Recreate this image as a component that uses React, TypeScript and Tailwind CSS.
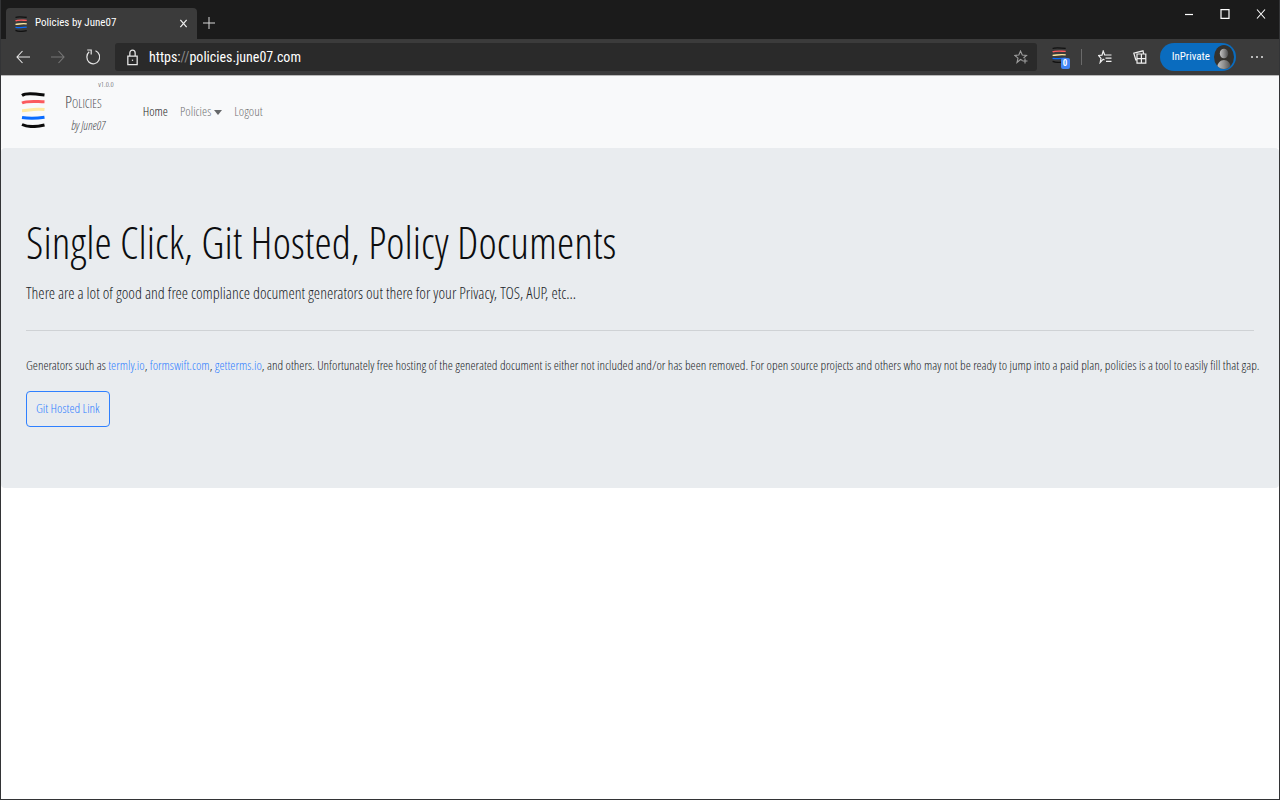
function Stripes({ className, edge = '#0b0b0b' }: { className: string; edge?: string }) {
  return (
    <svg viewBox="0 0 24 36" preserveAspectRatio="none" className={className} fill="none" strokeWidth="3" aria-hidden="true">
      <path d="M1 3.400C5 .8 12 1.600 23.500 3" stroke={edge} />
      <path d="M1 11C6 8.500 14 9.600 23.500 9.800" stroke="#fb5a5e" />
      <path d="M1 18.800C8 18.800 12 16 23.500 17.600" stroke="#ffe9a0" />
      <path d="M1 25.400C8 26.600 14 26.600 23.500 25.200" stroke="#0a6cff" />
      <path d="M1 32.500C7 35.200 16 34.800 23.500 33" stroke={edge} />
    </svg>
  );
}

function TabStrip() {
  return (
    <header className="flex h-[39px] items-stretch bg-[#1b1b1b] pl-[5px]">
      <div className="mt-2 flex w-[191px] items-center rounded-t bg-[#3b3b3b] pr-[6px] pl-[9px]">
        <Stripes className="h-4 w-3" edge="#111" />
        <span className="ml-2 flex-1 text-[11px]">Policies by June07</span>
        <button aria-label="Close tab" className="grid size-4 place-items-center">
          <svg viewBox="0 0 10 10" className="size-[9px]" fill="none" stroke="#eee" strokeWidth="1.400"><path d="M1.500 1l7 8M8.500 1l-7 8" /></svg>
        </button>
      </div>
      <button aria-label="New tab" className="mt-[6px] grid w-6 place-items-center">
        <svg viewBox="0 0 12 12" className="size-3" stroke="#d8d8d8" strokeWidth="1"><path d="M6 0v12M0 6h12" /></svg>
      </button>
      <div className="ml-auto flex h-7 items-center">
        <button aria-label="Minimize" className="grid h-full w-9 place-items-center">
          <svg viewBox="0 0 10 10" className="size-[10px]" stroke="#fff" strokeWidth="1.200"><path d="M1 5.500h8" /></svg>
        </button>
        <button aria-label="Maximize" className="grid h-full w-9 place-items-center">
          <svg viewBox="0 0 10 10" className="size-[10px]" fill="none" stroke="#fff" strokeWidth="1.200"><path d="M1 .6h8v8.800H1z" /></svg>
        </button>
        <button aria-label="Close window" className="grid h-full w-9 place-items-center">
          <svg viewBox="0 0 10 10" className="size-[10px]" stroke="#fff" strokeWidth="1.100"><path d="M1 .5l8 9M9 .5l-8 9" /></svg>
        </button>
      </div>
    </header>
  );
}

function Toolbar() {
  return (
    <div className="flex h-9 items-center bg-[#3b3b3b] pr-3 pl-[10px]">
      <div className="flex w-[104px] items-center">
        <button aria-label="Back" className="grid w-6 place-items-center">
          <svg viewBox="0 0 14 14" className="size-[14px]" fill="none" stroke="#e6e6e6" strokeWidth="1.100"><path d="M14 7H1M6.500 1L1 7l5.500 6" /></svg>
        </button>
        <button aria-label="Forward" className="ml-[11px] grid w-6 place-items-center">
          <svg viewBox="0 0 14 14" className="size-[14px]" fill="none" stroke="#777" strokeWidth="1.100"><path d="M0 7h13M7.500 1L13 7l-5.500 6" /></svg>
        </button>
        <button aria-label="Refresh" className="ml-[11px] grid w-6 place-items-center">
          <svg viewBox="0 0 14 16" className="h-4 w-[14px]" fill="none" stroke="#e6e6e6" strokeWidth="1.200"><path d="M9.500 1.700A6.400 6.800 0 1 1 3.200 2.800M1.200 1h4v4.500" /></svg>
        </button>
      </div>
      <div className="flex h-7 flex-1 items-center rounded-[3px] bg-[#2a2a2a] pr-2 pl-3">
        <svg viewBox="0 0 10 16" className="h-[17px] w-[11px]" fill="none" stroke="#e6e6e6" strokeWidth="1.200" aria-hidden="true">
          <path d="M.6 6.600h8.800v8H.6zM2.500 6.600V3.800a2.500 2.800 0 0 1 5 0v2.800" />
          <path d="M4.400 10h1.200v1.200H4.400z" fill="#e6e6e6" stroke="none" />
        </svg>
        <div aria-label="Address" className="ml-[11px] flex-1 text-[14px]">
          https:<span className="text-[#8b8b8b]">//</span>policies.june07.com
        </div>
        <button aria-label="Add to favorites" className="grid size-4 place-items-center">
          <svg viewBox="0 0 14 14" className="size-[14px]" fill="none" stroke="#9d9d9d" strokeWidth="1.100">
            <path d="M8.500 10.600L6.500 9.500 3 12.500 4 8.200.8 5.400l4-.4L6.500 1l1.800 4 4.200.4-3 2.600M11 8.500v5M8.500 11h5" />
          </svg>
        </button>
      </div>
      <button aria-label="Policies extension" className="relative ml-[15px] h-6 w-[18px]">
        <Stripes className="mb-1 h-4 w-[14px]" edge="#111" />
        <span className="absolute right-0 bottom-0 grid h-[11px] w-[9px] place-items-center rounded-[2px] bg-[#4285f4] text-[9px] leading-none font-bold">0</span>
      </button>
      <span className="ml-[11px] h-4 w-px bg-[#6a6a6a]" />
      <button aria-label="Favorites" className="ml-4 grid size-[14px] place-items-center">
        <svg viewBox="0 0 14 14" className="size-[14px]" fill="none" stroke="#f0f0f0" strokeWidth="1.200">
          <path d="M6.500 10L5.200 9.200 2.200 12.500 3 8.400.6 5.500l3.400-.3L5.200 1l1.500 4H13.500M7.500 8.200h6M8 11.400h5.500" />
        </svg>
      </button>
      <button aria-label="Collections" className="ml-[21px] grid size-[14px] place-items-center">
        <svg viewBox="0 0 14 14" className="size-[14px]" fill="none" stroke="#f0f0f0" strokeWidth="1.200">
          <path d="M4 4h8.800v9.200H4zM8.400 4v9.200M4 8.600h8.800M10.600 3.500L10 .8.8 3.200 3 10.500" />
        </svg>
      </button>
      <button className="ml-[13px] flex h-7 items-center rounded-full bg-[#0a6cbf] pr-[2px] pl-3 text-[11px]">
        InPrivate
        <svg viewBox="0 0 20 24" className="ml-1 h-6 w-5" aria-hidden="true">
          <defs>
            <linearGradient id="person"><stop offset="0" stopColor="#c4c4c4" /><stop offset=".5" stopColor="#8e8e8e" /><stop offset="1" stopColor="#4d4d4d" /></linearGradient>
            <clipPath id="disc"><ellipse cx="10" cy="12" rx="10" ry="12" /></clipPath>
          </defs>
          <g clipPath="url(#disc)">
            <path d="M0 0h20v24H0z" fill="#34322e" />
            <ellipse cx="10" cy="8.500" rx="4.200" ry="4.800" fill="url(#person)" />
            <path d="M3 24c0-12 14-12 14 0z" fill="url(#person)" />
          </g>
        </svg>
      </button>
      <button aria-label="Settings and more" className="ml-[11px] grid w-5 place-items-center">
        <svg viewBox="0 0 14 4" className="h-1 w-[14px]" fill="#e6e6e6"><circle cx="2" cy="2" r="1" /><circle cx="7" cy="2" r="1" /><circle cx="12" cy="2" r="1" /></svg>
      </button>
    </div>
  );
}

function SiteNav() {
  return (
    <nav className="flex h-[73px] items-center border-t border-[#b8b8b8] bg-[#f8f9fa] pl-5">
      <a href="#home" aria-label="Policies by June07" className="flex h-full text-[#4a4c50]">
        <Stripes className="mt-4 h-9 w-6" />
        <span className="ml-5 flex flex-col">
          <span className="pt-[2px] text-right text-[8px] leading-3">v1.0.0</span>
          <span className="pr-3 text-[17px] leading-6 [font-variant:small-caps]">Policies</span>
          <span className="pl-[6px] text-[12px] leading-6 italic">by June07</span>
        </span>
      </a>
      <div className="ml-[29px] flex gap-3 text-[13px]">
        <a href="#home" className="text-[#1b1b1c]">Home</a>
        <a href="#policies" className="flex items-center gap-[3px] text-[#737475]">
          Policies
          <svg viewBox="0 0 8 5" className="h-[5px] w-2" fill="#66686a" aria-hidden="true"><path d="M0 0h8L4 5z" /></svg>
        </a>
        <a href="#logout" className="text-[#737475]">Logout</a>
      </div>
    </nav>
  );
}

export default function App() {
  return (
    <div className="flex min-h-screen flex-col border border-t-0 border-[#333436] bg-white font-['Roboto_Condensed','Open_Sans',sans-serif] text-white">
      <TabStrip />
      <Toolbar />
      <div className="font-['Open_Sans_Condensed_Light','Open_Sans_Condensed','Open_Sans',sans-serif] text-[#212529]">
        <SiteNav />
        <main className="rounded-[4px] bg-[#e9ecef] px-[25px] pt-[60px] pb-[61px]">
          <h1 className="text-[44px] leading-[68px] text-[#0c0d0f]">Single Click, Git Hosted, Policy Documents</h1>
          <p className="mt-1 text-[16px] leading-[26px]">
            There are a lot of good and free compliance document generators out there for your Privacy, TOS, AUP, etc...
          </p>
          <hr className="mt-6 mb-[22px] border-[#cfd2d5]" />
          <p className="-mr-4 text-[13px] leading-6">
            Generators such as <a href="#termly" className="text-[#2f80ff]">termly.io</a>,{' '}
            <a href="#formswift" className="text-[#2f80ff]">formswift.com</a>,{' '}
            <a href="#getterms" className="text-[#2f80ff]">getterms.io</a>, and others. Unfortunately free hosting of the
            generated document is either not included and/or has been removed. For open source projects and others who may
            not be ready to jump into a paid plan, policies is a tool to easily fill that gap.
          </p>
          <button className="mt-[14px] h-9 rounded-[4px] border border-[#2f80ff] px-[9px] text-[13px] text-[#2f80ff]">Git Hosted Link</button>
        </main>
      </div>
    </div>
  );
}
